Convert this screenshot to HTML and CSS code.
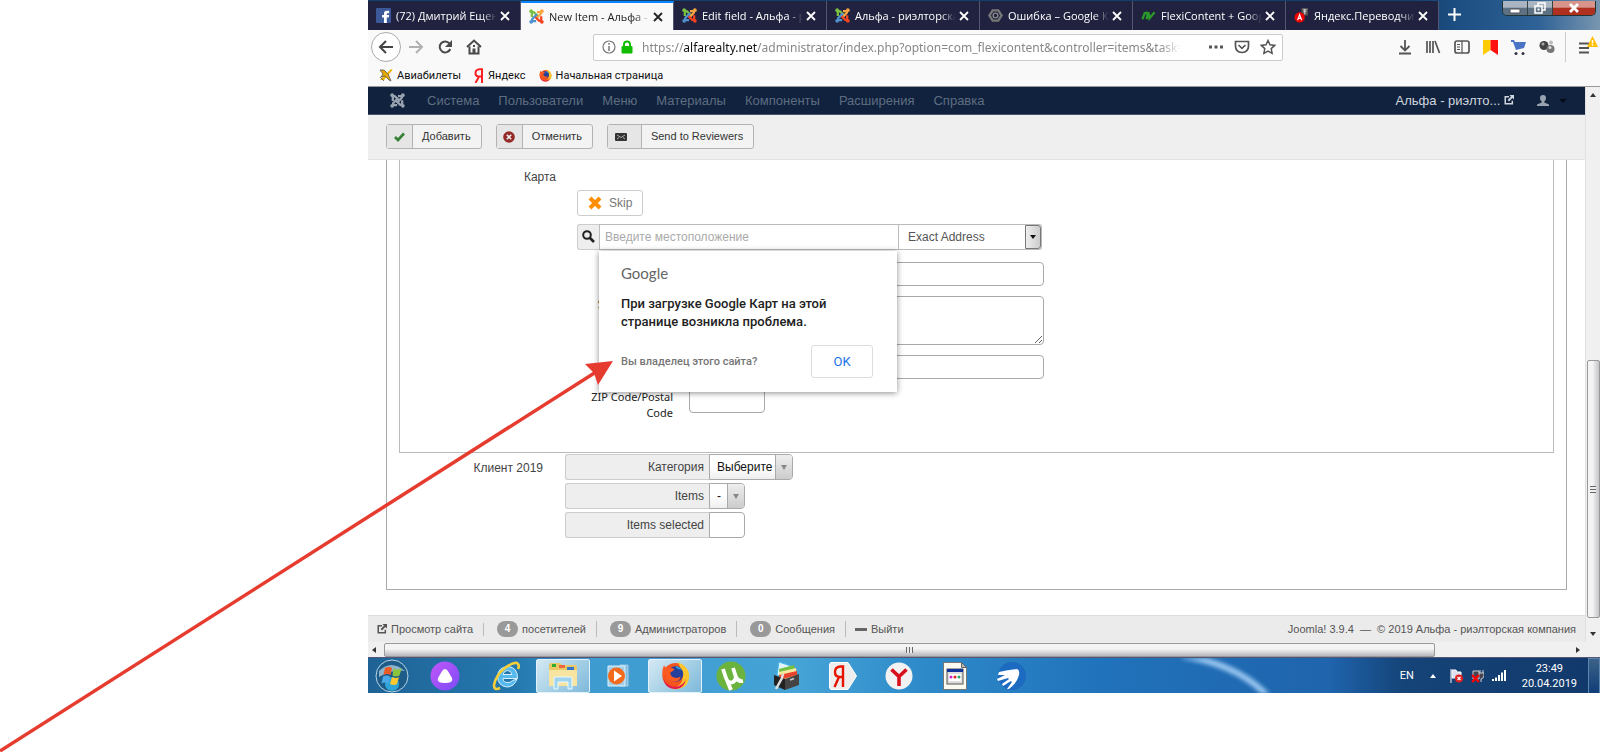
FILE: index.html
```
<!DOCTYPE html>
<html lang="ru">
<head>
    <meta charset="UTF-8">
    <meta name="viewport" content="width=device-width, initial-scale=1.0">
    <title>New Item - Альфа</title>
    <link rel="stylesheet" href="styles.css">
</head>
<body>
    <!-- общие иконки -->
    <svg class="defs" aria-hidden="true">
        <symbol id="joomla" viewBox="0 0 16 16">
            <g fill="none" stroke-width="2.4" stroke-linejoin="round">
                <path d="M3 8.600V5Q3 3 5 3.300L10.500 8.600" stroke="var(--j1, #7ac143)"/>
                <path d="M8.500 3.300H11Q13 3 12.700 5L7.400 10.500" stroke="var(--j2, #f9a541)"/>
                <path d="M13 7.600V11Q13 13 11 12.700L5.600 7.400" stroke="var(--j3, #f44321)"/>
                <path d="M7.600 13H5Q3 13 3.300 11L8.500 5.600" stroke="var(--j4, #5091cd)"/>
            </g>
            <circle cx="2.300" cy="2.300" r="2" fill="var(--j1, #7ac143)"/>
            <circle cx="13.700" cy="2.300" r="2" fill="var(--j2, #f9a541)"/>
            <circle cx="13.700" cy="13.700" r="2" fill="var(--j3, #f44321)"/>
            <circle cx="2.300" cy="13.700" r="2" fill="var(--j4, #5091cd)"/>
        </symbol>
        <symbol id="close" viewBox="0 0 10 10">
            <path d="M1 1l8 8M9 1l-8 8" stroke="currentColor" stroke-width="1.800" fill="none"/>
        </symbol>
        <symbol id="external" viewBox="0 0 12 12">
            <path d="M6 2H1.500v8.500H10V7" fill="none" stroke="currentColor" stroke-width="1.800"/>
            <path d="M6.500 0H12v5.500L10 3.600 6 7.700 4.300 6l4-4z" fill="currentColor"/>
        </symbol>
        <symbol id="firefox" viewBox="0 0 28 28">
            <circle cx="14" cy="14.500" r="12.500" fill="#f5541d"/>
            <path d="M16 1q9 3 11 11 1 9-5 13-6 3-11 2 10-3 10-12 0-5-5-14z" fill="#ffc52c"/>
            <circle cx="14" cy="12.500" r="7.500" fill="#253f9c"/>
            <path d="M14 5a7 7 0 0 1 6 4l-5-2z" fill="#2aa8e8"/>
            <path d="M3 4q1 3 4 3 4-1 6 1-1 2-4 3 0 4 4 5 3 1 6-1-1 5-6 5-7 0-9-7-1 1-2 5Q0 9 3 4z" fill="#fb5a21"/>
            <path d="M2 16q3 9 12 9 8-1 10-8-1 9-9 10Q4 28 2 16z" fill="#e31b50"/>
        </symbol>
    </svg>

    <div class="desktop">
        <div class="tabs">
            <button class="tab"><svg class="fav" viewBox="0 0 16 16"><rect width="16" height="16" rx="1" fill="#3b5998"/><path d="M8.500 16V10H6.500V7.500h2V6q0-3 3-3H14v2.500h-1.500q-1 0-1 1v1H14l-.4 2.500h-2.100v6z" fill="#fff"/></svg><span>(72) Дмитрий Ещенко</span><svg class="x"><use href="#close"/></svg></button>
            <button class="tab active"><svg class="fav"><use href="#joomla"/></svg><span>New Item - Альфа - р</span><svg class="x"><use href="#close"/></svg></button>
            <button class="tab"><svg class="fav"><use href="#joomla"/></svg><span>Edit field - Альфа - риэл</span><svg class="x"><use href="#close"/></svg></button>
            <button class="tab"><svg class="fav"><use href="#joomla"/></svg><span>Альфа - риэлторская</span><svg class="x"><use href="#close"/></svg></button>
            <button class="tab"><svg class="fav" viewBox="0 0 16 16"><path d="M5 2.500h6L14.500 8 11 13.500H5L1.500 8z" fill="none" stroke="#777" stroke-width="2.500"/><circle cx="8" cy="8" r="2.500" fill="none" stroke="#888" stroke-width="1.500"/></svg><span>Ошибка – Google Карты</span><svg class="x"><use href="#close"/></svg></button>
            <button class="tab"><svg class="fav" viewBox="0 0 16 16"><path d="M1.500 12L4 5.500q3-1.500 3 .5l-1 6M8 4.500L9 11l5.500-6.500" fill="none" stroke="#2a9a2a" stroke-width="2.400"/></svg><span>FlexiContent + Google</span><svg class="x"><use href="#close"/></svg></button>
            <button class="tab"><svg class="fav" viewBox="0 0 16 16"><rect x="8" y="0" width="7" height="8" fill="#555"/><path d="M9.500 2h4M10 4h3M11.500 1v6" stroke="#ddd"/><circle cx="6" cy="10" r="5.500" fill="#e00"/><path d="M3.800 13L6 7l2.200 6M4.800 11h2.600" stroke="#fff" fill="none" stroke-width="1.200"/></svg><span>Яндекс.Переводчик</span><svg class="x"><use href="#close"/></svg></button>
            <button class="newtab" aria-label="Новая вкладка"><svg width="13" height="13" viewBox="0 0 13 13"><path d="M6.500 0v13M0 6.500h13" stroke="#fff" stroke-width="2"/></svg></button>
            <div class="win">
                <button class="min" aria-label="Свернуть"><svg width="12" height="12" viewBox="0 0 12 12"><rect x="1" y="7" width="10" height="4" rx="1" fill="#fff" stroke="#555"/></svg></button>
                <button class="max" aria-label="Развернуть"><svg width="12" height="12" viewBox="0 0 12 12"><path d="M4 1h7v7H8V4H4zM1 4h7v7H1z" fill="none" stroke="#fff" stroke-width="1.500"/><rect x="3.500" y="6.500" width="2" height="2" fill="#fff"/></svg></button>
                <button class="cls" aria-label="Закрыть"><svg width="12" height="10" viewBox="0 0 12 10"><path d="M2 1l8 8M10 1L2 9" stroke="#fff" stroke-width="2.800"/></svg></button>
            </div>
        </div>

        <div class="navbar">
            <button class="back" aria-label="Назад"><svg width="16" height="14" viewBox="0 0 16 14"><path d="M8 1L2 7l6 6M2 7h13" fill="none" stroke="#444" stroke-width="2"/></svg></button>
            <button aria-label="Вперёд"><svg width="16" height="14" viewBox="0 0 16 14"><path d="M8 1l6 6-6 6M14 7H1" fill="none" stroke="#b0b0b0" stroke-width="2"/></svg></button>
            <button aria-label="Обновить"><svg width="16" height="16" viewBox="0 0 16 16"><path d="M12.500 4.500A5.500 5.500 0 1 0 13.300 10" fill="none" stroke="#4a4a4a" stroke-width="2"/><path d="M15 1v7H8z" fill="#4a4a4a"/></svg></button>
            <button aria-label="Домой"><svg width="16" height="16" viewBox="0 0 16 16"><path d="M1 8l7-6.500L15 8M3.500 7.500v7h9v-7" fill="none" stroke="#4a4a4a" stroke-width="2"/><path d="M6.500 14.500v-5h3v5" fill="#4a4a4a"/><path d="M7 6h2v2H7z" fill="#4a4a4a"/></svg></button>
            <div class="url">
                <svg width="14" height="14" viewBox="0 0 14 14"><circle cx="7" cy="7" r="6" fill="none" stroke="#777" stroke-width="1.200"/><path d="M7 6v5M7 3v1.800" stroke="#777" stroke-width="1.500"/></svg>
                <svg width="12" height="14" viewBox="0 0 12 14"><path d="M3 7V4.500Q3 1.500 6 1.500t3 3V7" fill="none" stroke="#12bc00" stroke-width="2"/><rect x=".5" y="6" width="11" height="7.500" rx="1" fill="#12bc00"/></svg>
                <span class="addr">https://<b>alfarealty.net</b>/administrator/index.php?option=com_flexicontent&amp;controller=items&amp;task=it</span>
                <svg width="16" height="4" viewBox="0 0 16 4"><path d="M1 .5h3v3H1zM6.500.5h3v3h-3zM12 .5h3v3h-3z" fill="#555"/></svg>
                <svg width="16" height="14" viewBox="0 0 16 14"><path d="M1.500 1.500h13V6q0 6-6.500 6.500Q1.500 12 1.500 6z" fill="none" stroke="#555" stroke-width="1.700"/><path d="M4.500 5L8 8.300 11.500 5" fill="none" stroke="#555" stroke-width="1.700"/></svg>
                <svg width="16" height="16" viewBox="0 0 16 16"><path d="M8 1.500l2 4.300 4.700.6-3.500 3.200.9 4.700L8 12l-4.100 2.300.9-4.700L1.300 6.400 6 5.800z" fill="none" stroke="#555" stroke-width="1.500"/></svg>
            </div>
            <div class="tools">
                <svg width="14" height="16" viewBox="0 0 14 16"><path d="M7 1v10M2.500 7L7 11.500 11.500 7M1 14.500h12" fill="none" stroke="#555" stroke-width="1.800"/></svg>
                <svg width="16" height="14" viewBox="0 0 16 14"><path d="M2 1v12M5 1v12M8 1v12M10 1l4.500 12" fill="none" stroke="#555" stroke-width="1.700"/></svg>
                <svg width="16" height="14" viewBox="0 0 16 14"><rect x="1" y="1" width="14" height="12" rx="2" fill="none" stroke="#555" stroke-width="1.700"/><path d="M8 1v12M3 4.500h3M3 7h3M3 9.500h3" stroke="#555" stroke-width="1.200"/></svg>
                <svg width="15" height="15" viewBox="0 0 15 15"><path d="M0 0h7.500v10L0 15z" fill="#fc0"/><path d="M7.500 0H15v15l-7.500-5z" fill="#f11"/></svg>
                <svg width="15" height="15" viewBox="0 0 15 15"><path d="M0 0h3l1 2h11l-2 6-8 2L2 2H0z" fill="#4a74c4"/><circle cx="5" cy="13.500" r="1.500" fill="#334"/><circle cx="12" cy="13.500" r="1.500" fill="#334"/></svg>
                <svg width="16" height="14" viewBox="0 0 16 14"><circle cx="5" cy="5.500" r="4.500" fill="#444"/><circle cx="4" cy="4" r="1.500" fill="#aaa"/><circle cx="11.500" cy="9" r="4" fill="#777"/><circle cx="11" cy="7.500" r="1.500" fill="#ddd"/><circle cx="12" cy="2.500" r="2" fill="#bbb"/></svg>
            </div>
            <button class="burger" aria-label="Меню"><svg width="20" height="20" viewBox="0 0 20 20"><path d="M1 8.500h10M1 13h10M1 17.500h10" stroke="#555" stroke-width="1.800"/><path d="M14.500 1L20 12H9z" fill="#ffbf00"/><path d="M14.500 5v3.500M14.500 9.300v1.500" stroke="#fff" stroke-width="1.500"/></svg></button>
        </div>

        <div class="bookmarks">
            <a href="#"><svg width="14" height="14" viewBox="0 0 14 14"><path d="M1 12L12 1l1.500 1L5 12z" fill="#f0b400"/><path d="M1 2h4l4 4 3 7-2-1-4-4-4 1 2-3zM1 9l4 4" fill="#e8a800" stroke="#555" stroke-width=".8"/></svg>Авиабилеты</a>
            <a href="#"><svg width="10" height="15" viewBox="0 0 10 15"><path d="M8 15V1.200H5.500Q1.500 1.500 1.500 5T5 8.500H8M5 8.500L1.500 15" fill="none" stroke="#f22" stroke-width="2"/></svg>Яндекс</a>
            <a href="#"><svg width="13" height="13"><use href="#firefox"/></svg>Начальная страница</a>
        </div>

        <div class="view">
            <div class="page">
                <div class="menu">
                    <svg class="jlogo"><use href="#joomla"/></svg>
                    <a href="#">Система</a>
                    <a href="#">Пользователи</a>
                    <a href="#">Меню</a>
                    <a href="#">Материалы</a>
                    <a href="#">Компоненты</a>
                    <a href="#">Расширения</a>
                    <a href="#">Справка</a>
                    <a href="#" class="site">Альфа - риэлто... <svg width="10" height="10"><use href="#external"/></svg></a>
                    <a href="#" class="user" aria-label="Профиль"><svg width="12" height="11" viewBox="0 0 12 11"><path d="M6 0q3 0 3 3T7.300 6.500v1L12 9.500V11H0V9.500l4.700-2v-1Q3 6 3 3t3-3z" fill="#9aa3b0"/></svg><i></i></a>
                </div>

                <div class="toolbar">
                    <button class="tbtn"><span class="ic"><svg width="11" height="10" viewBox="0 0 11 10"><path d="M1 5l3 3 6-6.500" fill="none" stroke="#378137" stroke-width="2.600"/></svg></span><span class="tx">Добавить</span></button>
                    <button class="tbtn"><span class="ic"><svg width="12" height="12" viewBox="0 0 12 12"><circle cx="6" cy="6" r="5.800" fill="#942a25"/><path d="M3.800 3.800l4.400 4.400M8.200 3.800L3.800 8.200" stroke="#eee" stroke-width="1.600"/></svg></span><span class="tx">Отменить</span></button>
                    <button class="tbtn wide"><span class="ic"><svg width="12" height="8" viewBox="0 0 12 8"><rect width="12" height="8" rx="1" fill="#333"/><path d="M2 2l4 2.500L10 2M2 6l2-1.500M10 6L8 4.500" fill="none" stroke="#ccc" stroke-width=".8"/></svg></span><span class="tx">Send to Reviewers</span></button>
                </div>

                <div class="outer">
                    <div class="inner">
                        <div class="label">Карта</div>
                        <div class="field">
                            <button class="skip"><svg width="14" height="14" viewBox="0 0 14 14"><path d="M2 2l10 10M12 2L2 12" stroke="#ff8f00" stroke-width="4"/></svg>Skip</button>
                            <div class="search">
                                <span class="mag"><svg width="13" height="13" viewBox="0 0 13 13"><circle cx="5" cy="5" r="3.800" fill="none" stroke="#222" stroke-width="2"/><path d="M8 8l4 4" stroke="#222" stroke-width="2.600"/></svg></span>
                                <input type="text" placeholder="Введите местоположение" aria-label="Введите местоположение">
                                <div class="exact">
                                    <select aria-label="Тип поиска"><option>Exact Address</option></select>
                                    <i></i>
                                </div>
                                <div class="popup">
                                    <div class="glogo">Google</div>
                                    <p>При загрузке Google Карт на этой странице возникла проблема.</p>
                                    <div class="prow">
                                        <a href="#">Вы владелец этого сайта?</a>
                                        <button>OK</button>
                                    </div>
                                </div>
                            </div>
                            <div class="address">
                                <input type="text" aria-label="Адрес">
                                <label for="street">Street Address</label>
                                <textarea id="street"></textarea>
                                <input type="text" aria-label="Город">
                                <label for="zip">ZIP Code/Postal Code</label>
                                <input type="text" id="zip" class="short">
                            </div>
                        </div>
                    </div>

                    <div class="client">
                        <div class="label">Клиент 2019</div>
                        <div class="rows">
                            <div class="row"><label for="cat">Категория</label><div class="sel cat"><select id="cat"><option>Выберите</option></select><i></i></div></div>
                            <div class="row"><label for="items">Items</label><div class="sel"><select id="items"><option>-</option></select><i></i></div></div>
                            <div class="row"><label for="picked">Items selected</label><input type="text" id="picked"></div>
                        </div>
                    </div>
                </div>

                <div class="footer">
                    <a href="#"><svg width="10" height="10"><use href="#external"/></svg>Просмотр сайта</a>
                    <span><b>4</b>посетителей</span>
                    <span><b>9</b>Администраторов</span>
                    <span><b>0</b>Сообщения</span>
                    <a href="#"><svg width="12" height="3"><rect width="12" height="3" fill="#666"/></svg>Выйти</a>
                    <div class="copy">Joomla! 3.9.4 &nbsp;—&nbsp; © 2019 Альфа - риэлторская компания</div>
                </div>
            </div>
            <div class="vscroll"><i class="up"></i><div class="vthumb"></div><i class="down"></i></div>
        </div>
        <div class="hscroll"><i class="left"></i><div class="hthumb"></div><i class="right"></i></div>

        <div class="taskbar">
            <svg class="glow" width="110" height="36" viewBox="0 0 110 36"><path d="M-5 -3Q60 5 92 44" fill="none" stroke="#9cc9f2" stroke-width="6"/></svg>
            <svg class="start" width="34" height="34" viewBox="0 0 34 34"><circle cx="17" cy="17" r="16" fill="#1d5c88" stroke="#b8d4e4"/><path d="M4 12q12-12 26 0-12-2-26 6z" fill="#8fb3c8"/><circle cx="17" cy="25" r="7" fill="#2fa4d8"/><path d="M10 9q4-2 7 0l-1.500 7q-3-2-7 0z" fill="#ee5a24"/><path d="M18.500 9.500q4 2 8 0l-2 7q-4 2-7 0z" fill="#8bc53f"/><path d="M8 17.500q4-2 7 0l-1.500 7q-3-2-7 0z" fill="#4aa8e8"/><path d="M17 18q4 2 7 0l-2 7q-3 2-7 0z" fill="#fdc72e"/></svg>
            <div class="task"><svg width="30" height="30" viewBox="0 0 30 30"><defs><linearGradient id="al" x2="1" y2="1"><stop stop-color="#c355fb"/><stop offset="1" stop-color="#7a4df5"/></linearGradient></defs><circle cx="15" cy="15" r="14.500" fill="url(#al)"/><path d="M15 8q2 0 3.500 3l3.500 6q2 5-7 5t-7-5l3.500-6Q13 8 15 8z" fill="#fff"/></svg></div>
            <div class="task ie"><svg width="30" height="30" viewBox="0 0 30 30"><path d="M25 18q-3 8-10 8-9-1-9.500-10.500Q6 6 16 5.500q10 1 9.500 12H11q0 4 5 4 3 0 4.500-2zM11 13.500h9q-1-4-4.500-4t-4.500 4z" fill="#56b9ee" stroke="#d6f0ff" stroke-width="1"/><path d="M8 27q-6 3-6-3Q4 14 13 7q8-6 12-5 3 2 1 6" fill="none" stroke="#f6cf38" stroke-width="2.600"/></svg></div>
            <div class="task on"><svg width="30" height="28" viewBox="0 0 30 28"><path d="M1 3q0-2 2-2h9l2 2h13q2 0 2 2v19H1z" fill="#e9c966"/><path d="M4 2h4v3H4z" fill="#3a3"/><path d="M11 3h6v3h-6z" fill="#e64"/><path d="M19 5h7v3h-7z" fill="#37c"/><path d="M1 8h28v16H1z" fill="#f6e4a0"/><path d="M6 27V16q0-1 2-1h14q2 0 2 1v11h-4v-7H10v7z" fill="#9fd4ee" stroke="#eafaff"/></svg></div>
            <div class="task"><svg width="26" height="24" viewBox="0 0 26 24"><path d="M17 1h7v22h-7z" fill="#4d9ccc"/><path d="M14 1h8v21h-8z" fill="#7ebbe0" stroke="#cdeaf8" stroke-width=".6"/><path d="M2 2h17v20H2z" fill="#a3cfe8" stroke="#ddf2fc"/><circle cx="10.500" cy="12" r="8.500" fill="#f26b1d"/><path d="M8 6.500v11l8-5.500z" fill="#fff"/></svg></div>
            <div class="task on"><svg width="29" height="29"><use href="#firefox"/></svg></div>
            <div class="task"><svg width="30" height="30" viewBox="0 0 30 30"><circle cx="15" cy="15" r="14.500" fill="#6cb33e"/><path d="M7 8l3 9q2 6 7 4 4-2 2-8l-2-6 3 9q2 5 7 4M11 19l4 10" fill="none" stroke="#fff" stroke-width="3.800"/></svg></div>
            <div class="task"><svg width="28" height="30" viewBox="0 0 28 30"><path d="M6 1l12 4-3 13-11-4z" fill="#dff4fd" stroke="#49b8e8"/><path d="M6 8l15-4 2 9-16 5z" fill="#6fc043"/><path d="M6 11l17-4 1 8-17 5z" fill="#f5e9a0"/><path d="M6 14l18-4v4L7 19z" fill="#e8432e"/><path d="M1 14l11 4v11L1 24z" fill="#222"/><path d="M12 18l14-5v11l-14 5z" fill="#444"/><path d="M17 19l4-1.500" stroke="#ccc" stroke-width="1.500"/><path d="M3 28l6-11 1-4" fill="none" stroke="#ddd" stroke-width="2.500"/></svg></div>
            <div class="task"><svg width="28" height="28" viewBox="0 0 28 28"><path d="M2 .5h17L27.500 14 19 27.500H2Q.5 27 .5 25V3Q.5 1 2 .5z" fill="#eee" stroke="#fff"/><path d="M14 25V4.500h-3q-5 .5-5 5.500t5 5h3M10 15L5.500 25" fill="none" stroke="#e61400" stroke-width="2.400"/></svg></div>
            <div class="task"><svg width="28" height="28" viewBox="0 0 28 28"><circle cx="14" cy="14" r="13.500" fill="#f2f2f2"/><path d="M6.500 7.500L14 14.500l7.500-7M14 14v10" fill="none" stroke="#d8101c" stroke-width="3.600"/></svg></div>
            <div class="task"><svg width="24" height="28" viewBox="0 0 24 28"><path d="M.5.500h18l5 5v22H.5z" fill="#fbfaf0" stroke="#777"/><path d="M18.500.5v5h5z" fill="#bbb" stroke="#666"/><rect x="4" y="7" width="16" height="15" fill="#ddd" stroke="#555"/><path d="M4 7h16v3H4z" fill="#139"/><path d="M6 12h12v7H6z" fill="#fff"/><circle cx="8" cy="15" r="1.500" fill="#c2c"/><circle cx="12" cy="15" r="1.500" fill="#d22"/><circle cx="16" cy="15" r="1.500" fill="#2a6"/></svg></div>
            <div class="task"><svg width="30" height="30" viewBox="0 0 30 30"><circle cx="16" cy="15" r="14" fill="#1c6bc0"/><path d="M3 11q8-2 18-3 3 1 2 6-2 8-10 14h-2l5-7-1-1-8 5-1-2 7-5-1-1-10 3-1-2 8-4H2z" fill="#fff"/></svg></div>
            <div class="tray">
                <span>EN</span>
                <i></i>
                <svg width="13" height="14" viewBox="0 0 13 14"><path d="M1 0v14M2 1h4l1 2h4v6H2z" stroke="#fff" fill="#dde"/><circle cx="9" cy="9.500" r="4" fill="#e02020"/><path d="M7.500 8l3 3M10.500 8l-3 3" stroke="#fff" stroke-width="1.200"/></svg>
                <svg width="13" height="14" viewBox="0 0 13 14"><path d="M2 2h6v8H2zM9 1v3M12 1v3M8 4h5v3q-1 3-3 3v3" stroke="#ccc" fill="#445"/><path d="M1 6l7 7M8 6l-7 7" stroke="#f00" stroke-width="2.400"/></svg>
                <svg width="14" height="11" viewBox="0 0 14 11"><path d="M1 9v2M4 7.500V11M7 5v6M10 2.500V11M13 0v11" stroke="#fff" stroke-width="2"/></svg>
                <div class="clock">23:49<br>20.04.2019</div>
            </div>
            <div class="peek"></div>
        </div>
    </div>

    <!-- стрелка к ссылке в окне -->
    <svg class="arrow" width="616" height="752" viewBox="0 0 616 752"><path d="M0 751L596 372" stroke="#e63c2f" stroke-width="3.500"/><path d="M613 361L585 364l9 9 4 12z" fill="#e63c2f"/></svg>
</body>
</html>
```
FILE: styles.css
```
* {
    box-sizing: border-box;
}

body {
    margin: 0;
    background: #fff;
    font-family: "Liberation Sans", Arial, sans-serif;
    font-size: 12px;
    color: #444;
    overflow: hidden;
}

button, input, select, textarea {
    font: inherit;
    color: inherit;
    margin: 0;
    padding: 0;
}

button {
    background: none;
    border: 0;
}

a {
    color: inherit;
    text-decoration: none;
}

svg {
    flex: none;
}

.defs {
    position: absolute;
    width: 0;
    height: 0;
}

.arrow {
    position: absolute;
    left: 0;
    top: 0;
    pointer-events: none;
}

.desktop {
    margin-left: 23%;
}

/* вкладки */
.tabs {
    display: flex;
    height: 30px;
    padding-top: 1px;
    background: linear-gradient(90deg, #16406c 85%, #1b4d80 88%, #2f6296 95%, #7896b0);
    font-family: "Open Sans", "Noto Sans", sans-serif;
    font-size: 11px;
    color: #fff;
}

.tab {
    display: flex;
    align-items: center;
    flex: 0 1 153px;
    min-width: 0;
    padding: 0 10px 0 8px;
    background: #20223f;
    border-right: 1px solid #55576e;
}

.tab.active {
    background: #f9f9fa;
    border-top: 2px solid #0a84ff;
    color: #222;
}

.fav {
    width: 15px;
    height: 15px;
}

.tab span {
    flex: 1;
    margin: 0 3px 0 5px;
    overflow: hidden;
    white-space: nowrap;
    text-align: left;
    -webkit-mask-image: linear-gradient(90deg, #000 85%, transparent);
    mask-image: linear-gradient(90deg, #000 85%, transparent);
}

.x {
    width: 10px;
    height: 10px;
}

.newtab {
    width: 30px;
}

.win {
    display: flex;
    height: 15px;
    margin: 0 4px 0 auto;
    border: 1px solid #233;
    border-top: 0;
    border-radius: 0 0 5px 5px;
    overflow: hidden;
}

.win button {
    width: 25px;
    background: linear-gradient(#a9b6c2 45%, #5d7183 50%);
    border-right: 1px solid #344;
    line-height: 0;
}

.win .cls {
    width: 42px;
    background: linear-gradient(#d8948a 45%, #b03020 50%);
    border: 0;
}

/* адресная строка */
.navbar {
    display: flex;
    align-items: center;
    height: 34px;
    background: #f9f9fa;
    padding-left: 3px;
}

.navbar button {
    width: 29px;
    line-height: 0;
}

.navbar .back {
    width: 30px;
    height: 30px;
    border: 1px solid #aaa;
    border-radius: 50%;
    background: #fff;
}

.url {
    display: flex;
    align-items: center;
    gap: 5px;
    flex: 0 1 690px;
    min-width: 0;
    height: 27px;
    margin-left: 105px;
    padding: 0 6px 0 8px;
    background: #fff;
    border: 1px solid #ccc;
    border-radius: 2px;
    font-family: "Noto Sans", "Open Sans", sans-serif;
    color: #888;
}

.addr {
    flex: 1;
    min-width: 0;
    margin: 0 22px 0 4px;
    overflow: hidden;
    white-space: nowrap;
    -webkit-mask-image: linear-gradient(90deg, #000 96%, transparent);
    mask-image: linear-gradient(90deg, #000 96%, transparent);
}

.addr b {
    font-weight: 400;
    color: #111;
}

.url svg:nth-last-child(-n+2) {
    margin-left: 5px;
}

.tools {
    display: flex;
    align-items: center;
    gap: 13px;
    margin-left: auto;
    padding-right: 10px;
}

.navbar .burger {
    width: 35px;
    height: 30px;
    border-left: 1px solid #ccc;
    padding: 0 2px 4px 12px;
}

.bookmarks {
    display: flex;
    height: 23px;
    background: #f9f9fa;
    border-bottom: 1px solid #999;
    padding-left: 11px;
    gap: 13px;
    font-family: Roboto, "Open Sans", sans-serif;
    font-size: 11px;
    color: #111;
}

.bookmarks a {
    display: flex;
    align-items: center;
    gap: 4px;
}

/* страница */
.view {
    display: flex;
}

.page {
    flex: 1;
    min-width: 0;
}

.menu {
    display: flex;
    align-items: center;
    height: 28px;
    background: #10223e;
    border-bottom: 1px solid #44536a;
    padding: 0 18px 0 22px;
    font-size: 13px;
    color: #5f6d80;
}

.menu a {
    padding: 0 10px 0 9px;
}

.jlogo {
    width: 15px;
    height: 15px;
    margin-right: 13px;
    --j1: #9aa3b0;
    --j2: #9aa3b0;
    --j3: #9aa3b0;
    --j4: #9aa3b0;
}

.menu .site {
    margin-left: auto;
    padding-right: 8px;
    color: #d0d6de;
}

.menu .user {
    display: flex;
    align-items: center;
    gap: 10px;
    padding: 0 0 0 15px;
}

.user i {
    border: 4px solid transparent;
    border-top-color: #050c18;
    border-bottom: 0;
}

.toolbar {
    display: flex;
    gap: 14px;
    height: 45px;
    padding: 9px 18px;
    background: #efefef;
    border-bottom: 1px solid #e3e3e3;
    font-size: 11px;
}

.tbtn {
    display: flex;
    height: 25px;
    border: 1px solid #b3b3b3;
    border-radius: 3px;
    background: #f3f3f3;
    color: #333;
}

.ic {
    display: flex;
    align-items: center;
    justify-content: center;
    width: 26px;
    height: 100%;
    background: #e6e6e6;
    border-right: 1px solid #b3b3b3;
}

.wide .ic {
    width: 34px;
    padding-right: 6px;
}

.tx {
    padding: 0 10px 0 9px;
    line-height: 23px;
}

.outer {
    margin: 0 18px 25px;
    padding: 0 12px 51px;
    border: 1px solid #aaa;
    border-top: 0;
}

.inner {
    display: grid;
    grid-template-columns: 156px 1fr;
    gap: 21px;
    padding: 7px 0 31px;
    border: 1px solid #bbb;
    border-top: 0;
}

.label {
    text-align: right;
    line-height: 20px;
}

.field {
    padding-top: 23px;
}

.skip {
    display: flex;
    align-items: center;
    gap: 7px;
    height: 26px;
    padding: 0 10px;
    border: 1px solid #ccc;
    border-radius: 3px;
    color: #777;
}

.search {
    position: relative;
    display: flex;
    width: 465px;
    height: 26px;
    margin: 8px 0 12px;
}

.mag {
    width: 22px;
    padding: 5px 4px;
    background: #eee;
    border: 1px solid #ccc;
    border-right: 0;
    border-radius: 3px 0 0 3px;
}

.search input {
    width: 300px;
    padding: 0 5px;
    border: 1px solid #bbb;
}

.search input::placeholder {
    color: #aaa;
}

.exact {
    display: flex;
    flex: 1;
    border: 1px solid #bbb;
    border-left: 0;
    border-radius: 0 3px 3px 0;
}

.exact select {
    flex: 1;
    min-width: 0;
    padding: 0 9px;
    border: 0;
    background: none;
    color: #555;
    appearance: none;
}

.exact i {
    display: flex;
    align-items: center;
    justify-content: center;
    width: 16px;
    border: 1px solid #777;
    border-radius: 0 3px 3px 0;
    background: linear-gradient(90deg, #eee, #ccc);
}

.exact i::after {
    content: "";
    border: 3px solid transparent;
    border-top: 4px solid #111;
    border-bottom: 0;
}

.popup {
    position: absolute;
    left: 22px;
    top: 27px;
    width: 298px;
    padding: 12px 24px 14px 22px;
    background: #fff;
    box-shadow: 0 1px 6px rgba(0, 0, 0, 0.45);
    font-family: Roboto, sans-serif;
}

.glogo {
    font-family: Lato, sans-serif;
    font-size: 15px;
    line-height: 20px;
    color: #666;
}

.popup p {
    margin: 12px 40px 14px 0;
    font-size: 13px;
    font-weight: 500;
    line-height: 18px;
    color: #212121;
}

.prow {
    display: flex;
    align-items: center;
    justify-content: space-between;
    font-size: 11px;
    font-weight: 500;
    color: #757575;
}

.prow button {
    width: 62px;
    height: 33px;
    border: 1px solid #ddd;
    border-radius: 3px;
    font-size: 13px;
    font-weight: 400;
    color: #1a73e8;
}

.address {
    display: grid;
    grid-template-columns: 96px 355px;
    gap: 10px 16px;
    font-family: "Noto Sans", "Open Sans", sans-serif;
    font-size: 11px;
    line-height: 16px;
    color: #222;
}

.address label {
    text-align: right;
}

.address input, .address textarea {
    grid-column: 2;
    height: 24px;
    border: 1px solid #aaa;
    border-radius: 4px;
}

.address textarea {
    height: 49px;
    display: block;
}

.address .short {
    width: 76px;
}

.client {
    display: grid;
    grid-template-columns: 156px 1fr;
    gap: 22px;
    margin-left: -12px;
    padding-top: 1px;
}

.client .label {
    padding-top: 4px;
}

.rows {
    display: grid;
    gap: 3px;
}

.row {
    display: flex;
    height: 26px;
}

.row label {
    width: 144px;
    padding-right: 5px;
    text-align: right;
    line-height: 24px;
    background: #eee;
    border: 1px solid #ccc;
    border-right: 0;
    border-radius: 3px 0 0 3px;
}

.row input, .sel {
    width: 36px;
    border: 1px solid #aaa;
    border-radius: 0 4px 4px 0;
}

.sel {
    display: flex;
    background: linear-gradient(#fff 50%, #eee);
}

.sel.cat {
    width: 84px;
}

.sel select {
    flex: 1;
    min-width: 0;
    padding-left: 7px;
    border: 0;
    background: none;
    color: #111;
    appearance: none;
}

.sel i {
    display: flex;
    align-items: center;
    justify-content: center;
    width: 17px;
    border-left: 1px solid #aaa;
    border-radius: 0 3px 3px 0;
    background: linear-gradient(#eee, #ccc);
}

.sel i::after {
    content: "";
    border: 3px solid transparent;
    border-top: 5px solid #888;
    border-bottom: 0;
}

.footer {
    display: flex;
    align-items: center;
    height: 27px;
    padding: 0 9px;
    background: #ebebeb;
    border-top: 1px solid #ddd;
    font-size: 11px;
    color: #555;
}

.footer a, .footer span {
    display: flex;
    align-items: center;
    gap: 4px;
    padding-right: 10px;
    margin-right: 9px;
    line-height: 13px;
    border-right: 1px solid #bbb;
}

.footer span {
    padding-left: 4px;
}

.footer a:nth-last-child(2) {
    border: 0;
}

.footer b {
    width: 21px;
    height: 16px;
    border-radius: 8px;
    background: #999;
    color: #fff;
    font-size: 10px;
    line-height: 16px;
    text-align: center;
}

.copy {
    margin-left: auto;
}

/* полосы прокрутки */
.vscroll {
    display: flex;
    flex-direction: column;
    align-items: center;
    width: 15px;
    padding: 6px 0;
    background: #f0f0f0;
    border-left: 1px solid #e0e0e0;
}

.vscroll i, .hscroll i, .tray i {
    border: 3px solid transparent;
}

.vscroll .up, .tray i {
    border-top: 0;
    border-bottom: 4px solid #333;
}

.vscroll .down {
    border-bottom: 0;
    border-top: 4px solid #333;
    margin-top: 14px;
}

.vthumb {
    width: 13px;
    height: 258px;
    margin-top: auto;
    border: 1px solid #999;
    border-radius: 2px;
    background: repeating-linear-gradient(#666 0 1px, #eee 1px 3px) center / 6px 7px no-repeat, linear-gradient(90deg, #f4f4f4 40%, #c4c4c9);
}

.hscroll {
    display: flex;
    align-items: center;
    height: 15px;
    padding: 0 20px 0 4px;
    background: #f0f0f0;
}

.hscroll .left {
    border-left: 0;
    border-right: 4px solid #333;
}

.hscroll .right {
    border-right: 0;
    border-left: 4px solid #333;
    margin-left: auto;
}

.hthumb {
    width: 87%;
    height: 14px;
    margin-left: 8px;
    border: 1px solid #999;
    border-radius: 2px;
    background: repeating-linear-gradient(90deg, #666 0 1px, #eee 1px 3px) center / 7px 6px no-repeat, linear-gradient(#f4f4f4 40%, #b8b8bc);
}

/* панель задач */
.taskbar {
    position: relative;
    display: flex;
    align-items: center;
    height: 36px;
    padding-left: 7px;
    background: linear-gradient(90deg, #1f6396, #2478ae 12%, #3d9bd0 18%, #46a3d6 35%, #2e8ac9 45%, #2072ba 60%, #1f64ad 78%, #154478 84%, #12386a);
    border-top: 1px solid #557;
    overflow: hidden;
}

/* блик обоев */
.glow {
    position: absolute;
    left: 66%;
    top: 0;
    filter: blur(2px);
}

.start {
    margin-right: 9px;
}

.task {
    display: flex;
    align-items: center;
    justify-content: center;
    width: 54px;
    height: 34px;
    margin-right: 2px;
}

.task.ie {
    margin-left: 6px;
}

.task.on {
    border: 1px solid #e3f2fa;
    border-radius: 2px;
    background: linear-gradient(135deg, #d5e9f3, #7db9da);
}

.tray {
    display: flex;
    align-items: center;
    gap: 8px;
    margin-left: auto;
    font-family: Roboto, "Open Sans", sans-serif;
    font-size: 11px;
    line-height: 15px;
    color: #fff;
}

.tray span {
    margin-right: 8px;
}

.tray i {
    border-bottom-color: #fff;
    margin-right: 6px;
}

.clock {
    margin: 0 11px 0 8px;
    text-align: center;
}

.peek {
    width: 12px;
    height: 36px;
    border: 1px solid #5b86b0;
    background: linear-gradient(#3d6288, #0f3d78);
}
```
